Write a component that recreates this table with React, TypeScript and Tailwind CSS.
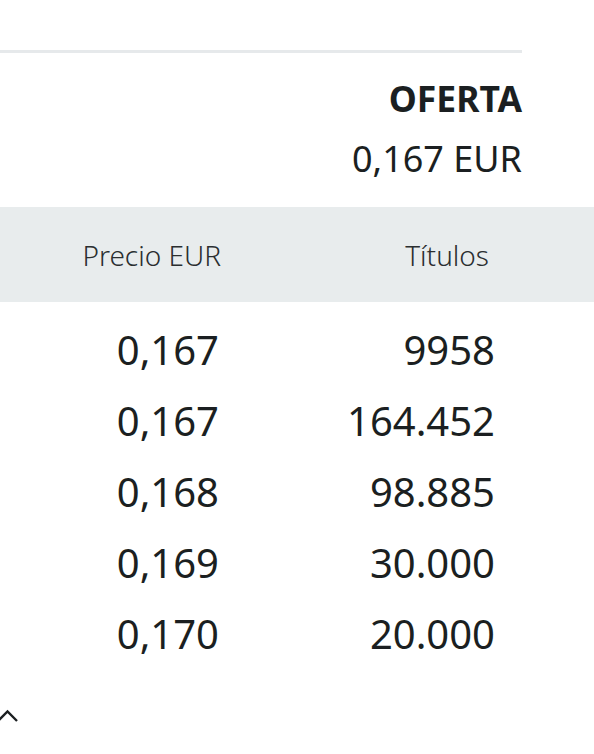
import React from "react";

const rows = [
  ["0,167", "9958"],
  ["0,167", "164.452"],
  ["0,168", "98.885"],
  ["0,169", "30.000"],
  ["0,170", "20.000"],
];

export default function App() {
  return (
    <div
      className="relative w-[594px] h-[754px] overflow-hidden bg-white text-[#1b1f21]"
      style={{ fontFamily: '"Noto Sans", "Open Sans", sans-serif' }}
    >
      <div className="pt-[50px] w-[522px]">
        <div className="h-[3px] bg-[#e6e9eb]" />
        <div className="mt-[28px] text-right text-[35.5px] leading-[34px] font-bold">OFERTA</div>
        <div className="mt-[27px] text-right text-[36px] leading-[34px]">0,167 EUR</div>
      </div>
      <div className="mt-[31px] h-[95px] bg-[#e8eced] flex items-center">
        <div className="w-[221px] text-right text-[28px] leading-[28px] font-light text-[#2a2e30]">
          Precio EUR
        </div>
        <div className="w-[268px] text-right text-[28px] leading-[28px] font-light text-[#2a2e30]">
          Títulos
        </div>
      </div>
      <div className="pt-[12px]">
        {rows.map(([p, t], i) => (
          <div key={i} className="h-[71px] flex items-center text-[40px] leading-[40px]">
            <div className="w-[219px] text-right">{p}</div>
            <div className="w-[276px] text-right">{t}</div>
          </div>
        ))}
      </div>
      <div className="mt-[38px]">
        <svg width="20" height="20" viewBox="0 0 20 20" fill="none">
          <path d="M-3 15 L7.5 4.5 L17 14" stroke="#1b1f21" strokeWidth="2.4" />
        </svg>
      </div>
    </div>
  );
}
